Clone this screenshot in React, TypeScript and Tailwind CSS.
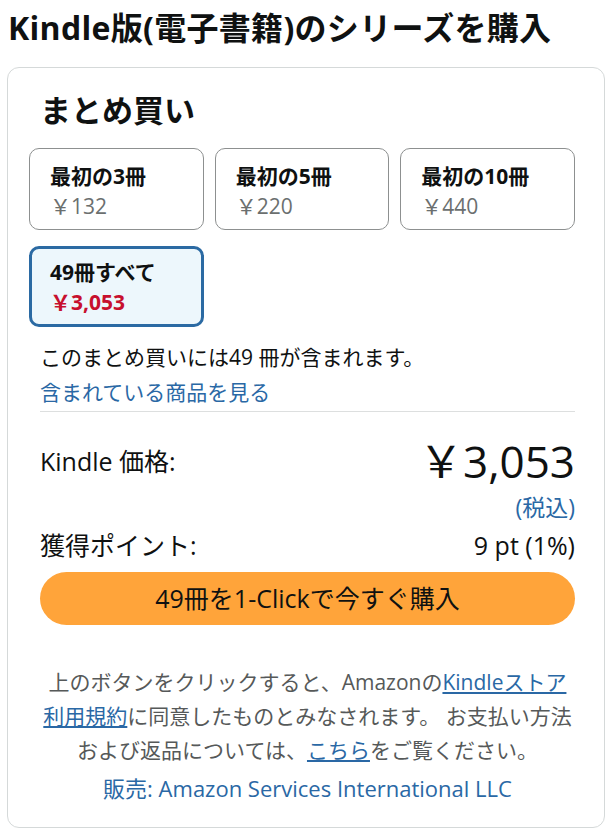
import React, { useState } from 'react';

const options = [
  { id: '3', label: '最初の3冊', price: '￥132' },
  { id: '5', label: '最初の5冊', price: '￥220' },
  { id: '10', label: '最初の10冊', price: '￥440' },
  { id: 'all', label: '49冊すべて', price: '￥3,053' },
];

export default function App() {
  const [selected, setSelected] = useState('all');

  return (
    <div
      className="w-[609px] h-[834px] bg-white text-[#0f1111] overflow-hidden"
      style={{ fontFamily: '"Open Sans", "Noto Sans CJK JP", sans-serif' }}
    >
      <h1 className="pt-[8px] pl-[8px] text-[32px] font-bold leading-[40px] tracking-[0.3px]">
        Kindle版(電子書籍)のシリーズを購入
      </h1>

      <div className="mt-[19px] ml-[7px] w-[598px] border border-[#d5d9d9] rounded-[12px] pl-[32px] pr-[29px] pt-[22px] pb-[22px]">
        <h2 className="text-[31px] font-bold leading-[40px]">まとめ買い</h2>

        {/* bundle options */}
        <div className="mt-[18px] -ml-[11px] grid grid-cols-3 gap-x-[11px] gap-y-[16px]">
          {options.map((opt) => {
            const isActive = selected === opt.id;
            return (
              <button
                key={opt.id}
                onClick={() => setSelected(opt.id)}
                className={
                  isActive
                    ? 'h-[81px] flex flex-col justify-start text-left rounded-[10px] border-[3px] border-[#2b6aa3] bg-[#edf7fc] pl-[18px] pt-[10px]'
                    : 'h-[82px] flex flex-col justify-start text-left rounded-[10px] border border-[#8d9090] bg-white pl-[20px] pt-[14px]'
                }
              >
                <div className="text-[21px] font-bold leading-[26px]">{opt.label}</div>
                <div
                  className={
                    isActive
                      ? 'mt-[4px] text-[21px] font-bold leading-[26px] text-[#c7102e]'
                      : 'mt-[4px] text-[21px] leading-[26px] text-[#6b6f6f]'
                  }
                >
                  {opt.price}
                </div>
              </button>
            );
          })}
        </div>

        <p className="mt-[13px] text-[21px] leading-[35px]">このまとめ買いには49 冊が含まれます。</p>
        <a href="#" className="block text-[21px] leading-[35px] text-[#2a68a5]">
          含まれている商品を見る
        </a>
        <div className="mt-[1px] h-px bg-[#dddfdf]" />

        <div className="mt-[23px] flex items-center justify-between">
          <span className="text-[25px] leading-[30px]">Kindle 価格:</span>
          <span className="text-[44px] leading-[52px]">￥3,053</span>
        </div>
        <div className="mt-[6px] text-right text-[23px] leading-[28px] text-[#2a68a5]">(税込)</div>

        <div className="mt-[9px] flex items-center justify-between text-[25px] leading-[30px]">
          <span>獲得ポイント:</span>
          <span>9 pt (1%)</span>
        </div>

        <button className="mt-[12px] w-full h-[53px] rounded-full bg-[#ffa43a] text-[25px] text-[#0f1111]">
          49冊を1-Clickで今すぐ購入
        </button>

        <p className="mt-[40px] text-center text-[21px] leading-[34px] text-[#565959]">
          上のボタンをクリックすると、Amazonの
          <a href="#" className="underline text-[#2a68a5]">Kindleストア<br />利用規約</a>
          に同意したものとみなされます。 お支払い方法
          <br />
          および返品については、
          <a href="#" className="underline text-[#2a68a5]">こちら</a>
          をご覧ください。
        </p>
        <p className="mt-[4px] text-center text-[22px] leading-[34px] text-[#2a68a5]">
          販売: Amazon Services International LLC
        </p>
      </div>
    </div>
  );
}
